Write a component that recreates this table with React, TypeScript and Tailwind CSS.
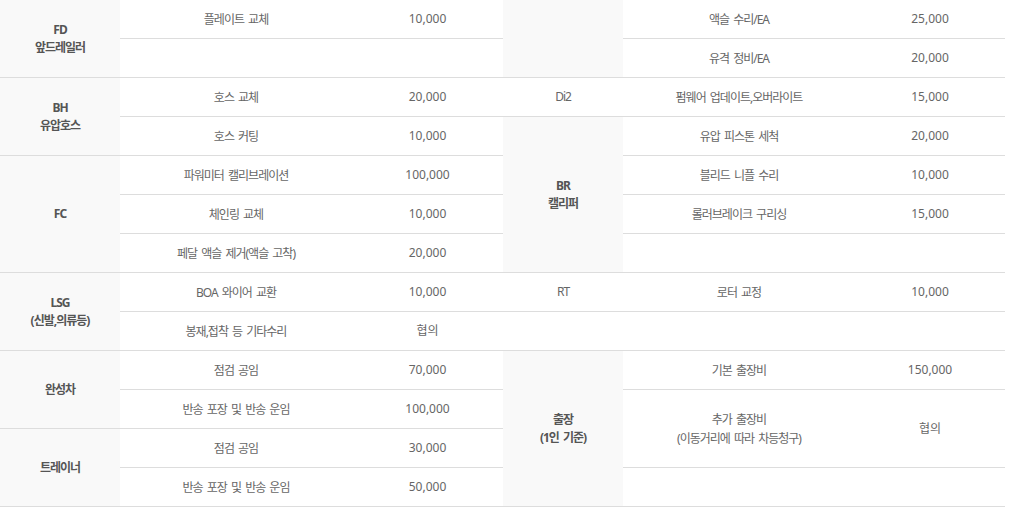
type Row = { item: string[]; price: string; span?: number };
type Group = { cat: string[]; plain?: boolean; rows: Row[] };

const spanClass: Record<number, string> = {
  1: "row-span-1",
  2: "row-span-2",
  3: "row-span-3",
  4: "row-span-4",
};

const leftGroups: Group[] = [
  {
    cat: ["FD", "앞드레일러"],
    rows: [
      { item: ["플레이트 교체"], price: "10,000" },
      { item: [], price: "" },
    ],
  },
  {
    cat: ["BH", "유압호스"],
    rows: [
      { item: ["호스 교체"], price: "20,000" },
      { item: ["호스 커팅"], price: "10,000" },
    ],
  },
  {
    cat: ["FC"],
    rows: [
      { item: ["파워미터 캘리브레이션"], price: "100,000" },
      { item: ["체인링 교체"], price: "10,000" },
      { item: ["페달 액슬 제거(액슬 고착)"], price: "20,000" },
    ],
  },
  {
    cat: ["LSG", "(신발,의류등)"],
    rows: [
      { item: ["BOA 와이어 교환"], price: "10,000" },
      { item: ["봉재,접착 등 기타수리"], price: "협의" },
    ],
  },
  {
    cat: ["완성차"],
    rows: [
      { item: ["점검 공임"], price: "70,000" },
      { item: ["반송 포장 및 반송 운임"], price: "100,000" },
    ],
  },
  {
    cat: ["트레이너"],
    rows: [
      { item: ["점검 공임"], price: "30,000" },
      { item: ["반송 포장 및 반송 운임"], price: "50,000" },
    ],
  },
];

const rightGroups: Group[] = [
  {
    cat: [],
    rows: [
      { item: ["액슬 수리/EA"], price: "25,000" },
      { item: ["유격 정비/EA"], price: "20,000" },
    ],
  },
  {
    cat: ["Di2"],
    plain: true,
    rows: [{ item: ["펌웨어 업데이트,오버라이트"], price: "15,000" }],
  },
  {
    cat: ["BR", "캘리퍼"],
    rows: [
      { item: ["유압 피스톤 세척"], price: "20,000" },
      { item: ["블리드 니플 수리"], price: "10,000" },
      { item: ["롤러브레이크 구리싱"], price: "15,000" },
      { item: [], price: "" },
    ],
  },
  {
    cat: ["RT"],
    plain: true,
    rows: [{ item: ["로터 교정"], price: "10,000" }],
  },
  {
    cat: [],
    plain: true,
    rows: [{ item: [], price: "" }],
  },
  {
    cat: ["출장", "(1인 기준)"],
    rows: [
      { item: ["기본 출장비"], price: "150,000" },
      { item: ["추가 출장비", "(이동거리에 따라 차등청구)"], price: "협의", span: 2 },
      { item: [], price: "" },
    ],
  },
];

function PriceTable({ groups, cols }: { groups: Group[]; cols: string }) {
  return (
    <div className={`grid auto-rows-[39px] ${cols}`}>
      {groups.map((g, gi) => {
        const total = g.rows.reduce((n, r) => n + (r.span ?? 1), 0);
        return [
          <div
            key={`c${gi}`}
            className={`${spanClass[total]} flex flex-col items-center justify-center border-b border-[#dddddd] leading-[18px] ${
              g.plain ? "bg-white text-[#666666]" : "bg-[#f9f9f9] font-bold text-[#555555]"
            }`}
          >
            {g.cat.map((t) => (
              <span key={t}>{t}</span>
            ))}
          </div>,
          ...g.rows.flatMap((r, ri) => [
            <div
              key={`i${gi}-${ri}`}
              className={`${spanClass[r.span ?? 1]} flex flex-col items-center justify-center border-b border-[#dddddd] leading-[19px] text-[#666666]`}
            >
              {r.item.map((t) => (
                <span key={t}>{t}</span>
              ))}
            </div>,
            <div
              key={`p${gi}-${ri}`}
              className={`${spanClass[r.span ?? 1]} flex items-center justify-center border-b border-[#dddddd] tracking-normal text-[#666666]`}
            >
              {r.price}
            </div>,
          ]),
        ];
      })}
    </div>
  );
}

export default function App() {
  return (
    <main className="min-h-screen bg-white font-['Noto_Sans','Noto_Sans_CJK_KR',sans-serif] text-[12px] tracking-[-1px] [word-spacing:2px]">
      <div className="flex w-[1005px]">
        <div className="w-[503px]">
          <PriceTable groups={leftGroups} cols="grid-cols-[120px_232px_151px]" />
        </div>
        <div className="w-[502px]">
          <PriceTable groups={rightGroups} cols="grid-cols-[120px_232px_150px]" />
        </div>
      </div>
    </main>
  );
}
